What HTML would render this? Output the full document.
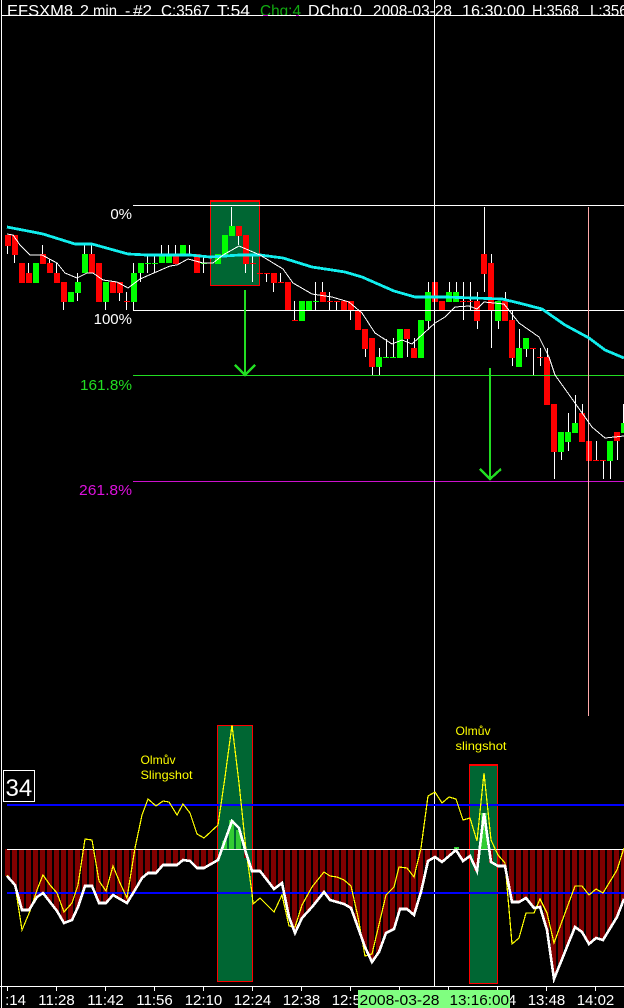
<!DOCTYPE html>
<html><head><meta charset="utf-8"><title>EFSXM8 chart</title>
<style>
html,body{margin:0;padding:0;background:#000;width:624px;height:1008px;overflow:hidden}
svg{display:block}
text{font-family:"Liberation Sans",sans-serif}
</style></head><body>
<svg width="624" height="1008" viewBox="0 0 624 1008" xmlns="http://www.w3.org/2000/svg">
<defs>
<pattern id="bars" patternUnits="userSpaceOnUse" x="5" y="0" width="7" height="10"><rect x="0" y="0" width="5" height="10" fill="#800000" shape-rendering="crispEdges"/></pattern>
<clipPath id="below"><rect x="0" y="849" width="624" height="137"/></clipPath>
<clipPath id="titleclip"><rect x="0" y="0" width="624" height="15"/></clipPath>
</defs>
<rect width="624" height="1008" fill="#000"/>

<g shape-rendering="crispEdges">
<!-- left border -->
<rect x="1" y="0" width="1" height="1008" fill="#fff"/>

<!-- price highlight -->
<rect x="210.5" y="200.5" width="49" height="85" fill="#006633" stroke="#f00"/>
<rect x="210" y="200" width="50" height="2" fill="#f00"/>

<!-- wicks -->
<path fill="none" stroke="#fff" stroke-width="1" d="M7.5 235V254M14.5 235V263M28.5 263V283M42.5 245V264M49.5 259V273M56.5 263V283M63.5 282V310M77.5 273V301M84.5 245V273M91.5 245V273M105.5 282V310M119.5 282V301M126.5 292V310M133.5 263V310M140.5 263V282M147.5 255V273M154.5 255V273M161.5 245V263M168.5 245V263M175.5 245V264M182.5 245V255M189.5 245V255M196.5 254V273M203.5 255V273M217.5 254V264M224.5 235V255M231.5 207V236M238.5 226V245M245.5 235V273M252.5 255V282M266.5 273V282M273.5 273V292M280.5 273V282M294.5 301V320M315.5 282V310M322.5 282V302M329.5 292V310M336.5 301V310M350.5 301V320M365.5 329V357M372.5 338V375M379.5 348V375M386.5 339V357M393.5 338V357M407.5 329V357M414.5 338V358M428.5 282V330M435.5 282V302M442.5 301V310M449.5 282V302M456.5 282V302M463.5 282V320M470.5 282V310M477.5 292V329M484.5 207V292M491.5 254V348M498.5 301V329M505.5 292V321M512.5 311V366M519.5 329V367M526.5 338V357M533.5 348V375M540.5 348V366M547.5 348V405M554.5 404V479M561.5 432V460M568.5 413V451M575.5 395V433M582.5 404V442M589.5 441V461M596.5 441V460M603.5 460V479M610.5 441V479M617.5 432V460M623.5 404V433"/>

<!-- red bodies -->
<path fill="#f00" d="M5 235h6v11h-6zM12 235h6v20h-6zM19 263h6v20h-6zM26 273h6v10h-6zM40 254h6v10h-6zM47 263h6v10h-6zM54 273h6v10h-6zM61 282h6v20h-6zM89 254h6v19h-6zM96 263h6v39h-6zM110 282h6v11h-6zM117 282h6v11h-6zM124 301h6v1h-6zM173 254h6v10h-6zM194 254h6v19h-6zM236 226h6v10h-6zM243 235h6v29h-6zM250 263h6v1h-6zM257 273h6v1h-6zM264 273h6v1h-6zM271 273h6v10h-6zM278 282h6v1h-6zM285 282h6v28h-6zM292 320h6v1h-6zM320 292h6v10h-6zM327 301h6v1h-6zM334 301h6v1h-6zM341 301h6v9h-6zM348 301h6v9h-6zM355 311h6v19h-6zM362 329h6v20h-6zM369 338h6v29h-6zM404 329h6v10h-6zM411 348h6v10h-6zM432 282h6v20h-6zM439 301h6v9h-6zM460 301h6v1h-6zM467 301h6v1h-6zM474 301h6v20h-6zM481 254h6v20h-6zM488 263h6v47h-6zM502 301h6v20h-6zM509 320h6v38h-6zM530 348h6v1h-6zM537 357h6v1h-6zM544 357h6v48h-6zM551 404h6v48h-6zM579 413h6v29h-6zM586 441h6v20h-6zM593 460h6v1h-6zM600 460h6v1h-6zM614 432h6v9h-6z"/>
<!-- green bodies -->
<path fill="#0f0" d="M33 263h6v20h-6zM68 292h6v10h-6zM75 282h6v11h-6zM82 254h6v19h-6zM103 282h6v20h-6zM131 273h6v29h-6zM138 263h6v10h-6zM145 263h6v1h-6zM152 263h6v1h-6zM159 254h6v9h-6zM166 254h6v9h-6zM180 245h6v10h-6zM201 263h6v1h-6zM215 254h6v10h-6zM222 235h6v20h-6zM229 226h6v10h-6zM299 301h6v20h-6zM306 301h6v9h-6zM313 301h6v1h-6zM376 357h6v10h-6zM383 357h6v1h-6zM390 357h6v1h-6zM397 329h6v29h-6zM418 320h6v38h-6zM425 292h6v29h-6zM446 292h6v10h-6zM453 292h6v10h-6zM495 301h6v20h-6zM516 348h6v19h-6zM523 338h6v11h-6zM558 432h6v20h-6zM565 432h6v10h-6zM572 423h6v10h-6zM607 441h6v20h-6zM621 423h3v10h-3z"/>

<!-- fib lines -->
<rect x="133" y="205" width="491" height="1" fill="#fff"/>
<rect x="133" y="310" width="491" height="1" fill="#fff"/>
<rect x="133" y="375" width="491" height="1" fill="#22dd22"/>
<rect x="133" y="481" width="491" height="1" fill="#cc11cc"/>

<!-- crosshair and pink line -->
<rect x="434" y="0" width="1" height="986" fill="#fff"/>
<rect x="588" y="207" width="1" height="509" fill="#ffaaaa"/>

<!-- moving averages -->
<polyline fill="none" stroke="#11eeee" stroke-width="2.8" points="7,227 33,232 43,234 75,244 92,244 128,254 147,255 190,255 210,257 240,255 260,255 283,258 312,267 332,270 345,272 362,277 394,291 415,297 445,297 502,299 519,303 542,309 565,325 589,338 605,350 624,358"/>
<polyline fill="none" stroke="#fff" stroke-width="1" points="7,234 13,235 20,245 30,255 42,255 57,263 65,273 77,278 87,273 93,273 103,280 117,282 128,288 140,279 170,266 177,265 188,259 203,263 213,263 223,255 239,246 260,255 283,269 293,283 312,294 332,297 349,302 362,313 375,333 392,344 402,340 412,344 435,323 445,317 455,307 469,306 477,309 484,302 504,304 519,323 539,337 549,357 555,375 575,403 592,427 605,438 624,436"/>

<!-- arrows -->
<path fill="none" stroke="#22dd22" stroke-width="2.4" d="M245 290V375M235 365L245 375L255 365"/>
<path fill="none" stroke="#22dd22" stroke-width="2.4" d="M490 368V479M480 469L490 479L501 469"/>

<!-- histogram -->
<polygon clip-path="url(#below)" fill="url(#bars)" points="5,849 5,876 7,876 15,885 22,910 29,910 37,897 43,893 57,911 64,923 72,920 78,907 85,886 92,886 99,903 106,903 113,895 127,903 135,890 142,878 148,873 156,873 163,865 177,865 183,860 190,861 197,868 204,868 218,860 232,821 239,828 246,853 252,871 260,871 274,889 282,883 289,917 295,933 302,918 312,907 324,892 330,900 344,904 351,908 365,947 372,962 379,952 386,933 394,929 400,909 407,909 414,915 421,892 428,861 435,857 442,862 456,850 463,861 470,856 477,871 484,813 491,862 498,866 505,866 512,902 519,902 526,898 534,908 540,907 547,930 554,979 575,927 582,932 589,944 596,938 603,940 617,917 624,899 624,849"/>

<!-- indicator highlights -->
<rect x="217.5" y="725.5" width="35" height="256" fill="#006633" stroke="#f00"/>
<rect x="469.5" y="764.5" width="28" height="219" fill="#006633" stroke="#f00"/>
<rect x="469" y="764" width="29" height="2" fill="#f00"/>
<path fill="#800000" d="M474 850h4v21h-4zM489 850h4v13h-4zM244 850h2v8h-2z"/>

<!-- positive bars -->
<path fill="#33cc33" d="M222 841h5v8h-5zM229 820h5v29h-5zM236 830h5v19h-5zM243 842h2v7h-2zM481 813h6v36h-6zM454 847h5v2h-5z"/>

<!-- level lines -->
<rect x="7" y="804" width="617" height="2" fill="#0000ff"/>
<rect x="7" y="892" width="617" height="2" fill="#0000ff"/>
<rect x="7" y="849" width="617" height="1" fill="#fff"/>

<!-- yellow line -->
<polyline fill="none" stroke="#ffff00" stroke-width="1.2" points="7,875 15,885 22,930 30,911 37,890 43,875 50,885 57,893 64,912 72,903 78,885 85,839 92,840 99,881 106,891 113,866 120,883 127,898 135,848 142,815 148,799 156,806 163,801 169,802 177,815 183,804 190,813 197,834 204,838 218,825 225,777 232,725 239,783 246,850 252,893 253,904 260,898 274,912 282,895 289,926 295,927 302,905 312,887 324,872 330,876 337,877 344,880 351,886 358,917 365,956 372,954 386,895 394,887 399,867 407,868 414,877 421,848 428,796 435,792 442,803 449,797 456,799 463,820 470,818 477,841 484,773 491,840 498,855 505,863 512,944 519,938 526,913 534,913 540,899 547,913 554,943 575,886 582,886 589,895 596,889 603,893 617,870 624,848"/>
<!-- white line -->
<polyline fill="none" stroke="#fff" stroke-width="2.6" points="7,876 15,885 22,910 29,910 37,897 43,893 57,911 64,923 72,920 78,907 85,886 92,886 99,903 106,903 113,895 127,903 135,890 142,878 148,873 156,873 163,865 177,865 183,860 190,861 197,868 204,868 218,860 232,821 239,828 246,853 252,871 260,871 274,889 282,883 289,917 295,933 302,918 312,907 324,892 330,900 344,904 351,908 365,947 372,962 379,952 386,933 394,929 400,909 407,909 414,915 421,892 428,861 435,857 442,862 456,850 463,861 470,856 477,871 484,813 491,862 498,866 505,866 512,902 519,902 526,898 534,908 540,907 547,930 554,979 575,927 582,932 589,944 596,938 603,940 617,917 624,899"/>

<!-- time axis -->
<rect x="0" y="986" width="624" height="1" fill="#fff"/>
<path fill="none" stroke="#fff" stroke-width="1" d="M7.5 986V991M56.5 986V991M105.5 986V991M154.5 986V991M203.5 986V991M252.5 986V991M301.5 986V991M350.5 986V991M399.5 986V991M448.5 986V991M497.5 986V991M546.5 986V991M595.5 986V991"/>

<!-- 34 box -->
<rect x="3.5" y="770.5" width="31" height="31" fill="#000" stroke="#fff"/>
</g>

<!-- title -->
<g clip-path="url(#titleclip)" font-size="16" fill="#fff">
<text x="7" y="16" textLength="66" lengthAdjust="spacingAndGlyphs">EFSXM8</text>
<text x="80" y="16">2</text>
<text x="93" y="16" textLength="24" lengthAdjust="spacingAndGlyphs">min</text>
<text x="125" y="16">-</text>
<text x="133" y="16" textLength="19" lengthAdjust="spacingAndGlyphs">#2</text>
<text x="161" y="16" textLength="49" lengthAdjust="spacingAndGlyphs">C:3567</text>
<text x="217" y="16" textLength="33" lengthAdjust="spacingAndGlyphs">T:54</text>
<text x="260" y="16" textLength="41" lengthAdjust="spacingAndGlyphs" fill="#11aa11">Chg:4</text>
<text x="308" y="16" textLength="54" lengthAdjust="spacingAndGlyphs">DChg:0</text>
<text x="373" y="16" textLength="79" lengthAdjust="spacingAndGlyphs">2008-03-28</text>
<text x="462" y="16" textLength="63" lengthAdjust="spacingAndGlyphs">16:30:00</text>
<text x="532" y="16" textLength="47" lengthAdjust="spacingAndGlyphs">H:3568</text>
<text x="590" y="16" textLength="46" lengthAdjust="spacingAndGlyphs">L:3566</text>
</g>
<g shape-rendering="crispEdges">
<rect x="2" y="15" width="622" height="1" fill="#fff"/>
<rect x="263" y="15" width="5" height="1" fill="#cc11cc"/>
<rect x="296" y="15" width="3" height="1" fill="#cc11cc"/>
</g>

<!-- fib labels -->
<g font-size="15" text-anchor="end">
<text x="132" y="219" fill="#fff">0%</text>
<text x="132" y="324" fill="#fff">100%</text>
<text x="132" y="390" fill="#22dd22" textLength="52" lengthAdjust="spacingAndGlyphs">161.8%</text>
<text x="132" y="495" fill="#dd11dd" textLength="53" lengthAdjust="spacingAndGlyphs">261.8%</text>
</g>

<!-- annotations -->
<g font-size="12" fill="#ffff00">
<text x="140.500" y="764" textLength="35" lengthAdjust="spacingAndGlyphs">Olmův</text>
<text x="140.500" y="779" textLength="52" lengthAdjust="spacingAndGlyphs">Slingshot</text>
<text x="455.500" y="735" textLength="35" lengthAdjust="spacingAndGlyphs">Olmův</text>
<text x="455.500" y="750" textLength="51" lengthAdjust="spacingAndGlyphs">slingshot</text>
</g>
<text x="5.500" y="796" font-size="24" fill="#fff">34</text>

<!-- time labels -->
<g font-size="15" fill="#fff" text-anchor="middle">
<text x="26" y="1005" text-anchor="end">:14</text>
<text x="56.500" y="1005">11:28</text>
<text x="105.500" y="1005">11:42</text>
<text x="154.500" y="1005">11:56</text>
<text x="203.500" y="1005">12:10</text>
<text x="252.500" y="1005">12:24</text>
<text x="301.500" y="1005">12:38</text>
<text x="350.500" y="1005">12:52</text>
<text x="497.500" y="1005">13:34</text>
<text x="546.500" y="1005">13:48</text>
<text x="595.500" y="1005">14:02</text>
</g>
<rect x="358" y="990" width="152" height="18" fill="#80ff80" shape-rendering="crispEdges"/>
<g font-size="15" fill="#000">
<text x="359.500" y="1005" textLength="80" lengthAdjust="spacingAndGlyphs">2008-03-28</text>
<text x="449.500" y="1005" textLength="59.500" lengthAdjust="spacingAndGlyphs">13:16:00</text>
</g>
</svg>
</body></html>
